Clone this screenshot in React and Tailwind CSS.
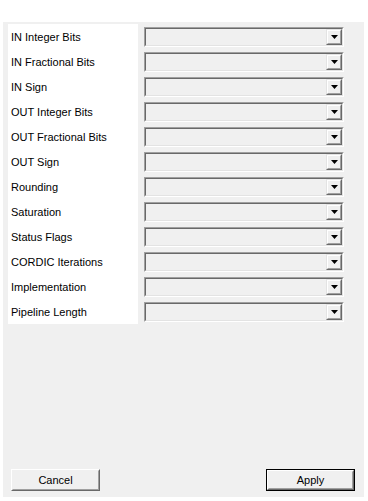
import React from "react";

const labels = [
  "IN Integer Bits",
  "IN Fractional Bits",
  "IN Sign",
  "OUT Integer Bits",
  "OUT Fractional Bits",
  "OUT Sign",
  "Rounding",
  "Saturation",
  "Status Flags",
  "CORDIC Iterations",
  "Implementation",
  "Pipeline Length",
];

function Combo() {
  return (
    <div className="w-[200px] h-[20px] border border-t-[#a0a0a0] border-l-[#a0a0a0] border-b-white border-r-white">
      <div className="w-full h-full border border-t-[#696969] border-l-[#696969] border-b-[#e3e3e3] border-r-[#e3e3e3] bg-[#f0f0f0] flex justify-end">
        <div className="w-[16px] h-[16px] border border-t-[#e3e3e3] border-l-[#e3e3e3] border-b-[#696969] border-r-[#696969]">
          <div className="w-full h-full border border-t-white border-l-white border-b-[#a0a0a0] border-r-[#a0a0a0] bg-[#f0f0f0] flex items-center justify-center">
            <svg width="7" height="4" viewBox="0 0 7 4" className="block">
              <polygon points="0,0 7,0 3.5,4" fill="#000" />
            </svg>
          </div>
        </div>
      </div>
    </div>
  );
}

function Btn({ children, def }) {
  const inner = (
    <div className="w-full h-full border border-t-white border-l-white border-b-[#696969] border-r-[#696969]">
      <div className="w-full h-full border border-t-[#f0f0f0] border-l-[#f0f0f0] border-b-[#a0a0a0] border-r-[#a0a0a0] bg-[#f0f0f0] flex items-center justify-center text-[11px] text-black">
        {children}
      </div>
    </div>
  );
  if (def) {
    return <div className="w-[89px] h-[22px] border border-black">{inner}</div>;
  }
  return <div className="w-[89px] h-[22px]">{inner}</div>;
}

export default function App() {
  return (
    <div
      className="w-[368px] h-[501px] bg-white pt-[22px] pl-[3px] pr-[4px] pb-[4px]"
      style={{ fontFamily: '"Liberation Sans", Arial, sans-serif' }}
    >
      <div className="w-full h-full bg-[#f0f0f0] flex flex-col justify-between">
        <div className="flex pl-[5px] pt-[2px] gap-[6px]">
          <div className="w-[130px] bg-white flex flex-col gap-[5px] pt-[3px] pb-[2px] pl-[3px]">
            {labels.map((l) => (
              <div key={l} className="h-[20px] flex items-center text-[11px] text-black leading-none">
                {l}
              </div>
            ))}
          </div>
          <div className="flex flex-col gap-[5px] pt-[3px]">
            {labels.map((l) => (
              <Combo key={l} />
            ))}
          </div>
        </div>
        <div className="flex justify-between pl-[8px] pr-[9px] pb-[6px]">
          <Btn>Cancel</Btn>
          <Btn def>Apply</Btn>
        </div>
      </div>
    </div>
  );
}
